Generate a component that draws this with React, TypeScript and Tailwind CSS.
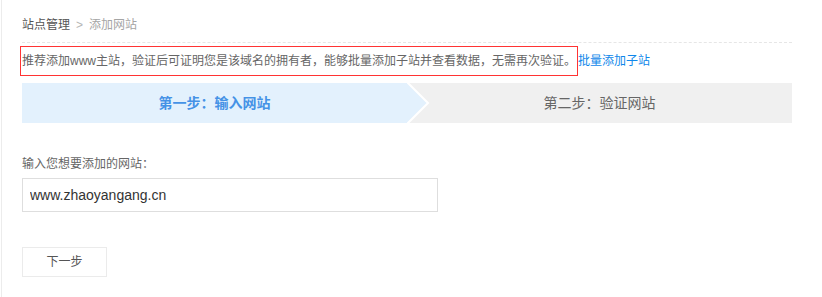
export default function App() {
  return (
    <div className="min-h-[297px] bg-white pl-px font-['Liberation_Sans','Noto_Sans_CJK_SC',sans-serif]">
      <div className="min-h-[297px] border-l border-[#ececec] pl-[20px] pr-[30px]">
        {/* Breadcrumb */}
        <div className="flex items-center border-b border-dashed border-[#e6e6e6] pt-[17px] pb-[9px] text-[12px] leading-[16px]">
          <span className="text-[#555]">站点管理</span>
          <span className="mx-[6px] text-[#b5b5b5]">&gt;</span>
          <span className="text-[#a5a5a5]">添加网站</span>
        </div>

        {/* Notice */}
        <div className="mt-[3px] flex items-center text-[12px]">
          <div className="-ml-[2px] h-[30px] border border-[#ff3333] px-px leading-[28px] text-[#666]">
            推荐添加www主站，验证后可证明您是该域名的拥有者，能够批量添加子站并查看数据，无需再次验证。
          </div>
          <a href="#" className="leading-[28px] text-[#0f87ea]">
            批量添加子站
          </a>
        </div>

        {/* Steps */}
        <div className="mt-[7px] grid h-[40px] grid-cols-2 bg-[#f0f0f0] text-[14px]">
          <div className="relative flex items-center justify-center bg-[#e3f1fd] font-bold text-[#4592e6]">
            第一步：输入网站
            <svg
              className="absolute left-full top-0 z-10"
              width="24"
              height="40"
              viewBox="0 0 24 40"
            >
              <path d="M0 0 L20 20 L0 40 Z" fill="#e3f1fd" />
              <path d="M0 -1 L21 20 L0 41" fill="none" stroke="#ffffff" strokeWidth="2" />
            </svg>
          </div>
          <div className="flex items-center justify-center text-[#666]">第二步：验证网站</div>
        </div>

        {/* Form */}
        <div className="mt-[33px] text-[12px] leading-[16px] text-[#666]">输入您想要添加的网站：</div>
        <input
          type="text"
          defaultValue="www.zhaoyangang.cn"
          className="mt-[6px] block h-[34px] w-[416px] border border-[#dedede] px-[7px] text-[14px] text-[#333] outline-none"
        />

        <button className="mt-[35px] block h-[30px] w-[85px] border border-[#ebebeb] bg-white text-[12px] text-[#555]">
          下一步
        </button>
      </div>
    </div>
  );
}
